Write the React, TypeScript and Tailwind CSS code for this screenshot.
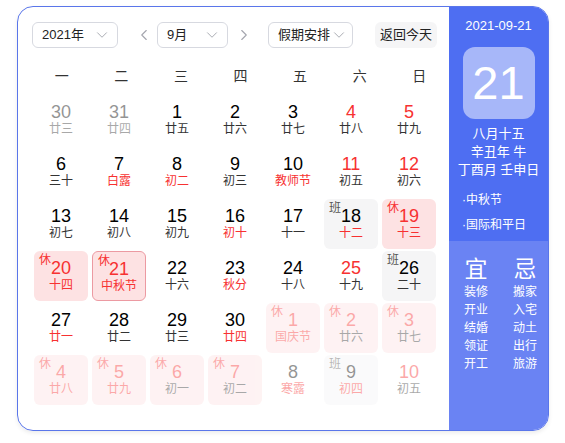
import { ChevronDown, ChevronLeft, ChevronRight } from 'lucide-react'

type Cell = {
  d: number
  l: string
  red?: boolean
  lred?: boolean
  tag?: '休' | '班'
  faded?: boolean
  selected?: boolean
}

const weeks: Cell[][] = [
  [
    { d: 30, l: '廿三', faded: true },
    { d: 31, l: '廿四', faded: true },
    { d: 1, l: '廿五' },
    { d: 2, l: '廿六' },
    { d: 3, l: '廿七' },
    { d: 4, l: '廿八', red: true },
    { d: 5, l: '廿九', red: true },
  ],
  [
    { d: 6, l: '三十' },
    { d: 7, l: '白露', lred: true },
    { d: 8, l: '初二', lred: true },
    { d: 9, l: '初三' },
    { d: 10, l: '教师节', lred: true },
    { d: 11, l: '初五', red: true },
    { d: 12, l: '初六', red: true },
  ],
  [
    { d: 13, l: '初七' },
    { d: 14, l: '初八' },
    { d: 15, l: '初九' },
    { d: 16, l: '初十', lred: true },
    { d: 17, l: '十一' },
    { d: 18, l: '十二', lred: true, tag: '班' },
    { d: 19, l: '十三', red: true, lred: true, tag: '休' },
  ],
  [
    { d: 20, l: '十四', red: true, lred: true, tag: '休' },
    { d: 21, l: '中秋节', red: true, lred: true, tag: '休', selected: true },
    { d: 22, l: '十六' },
    { d: 23, l: '秋分', lred: true },
    { d: 24, l: '十八' },
    { d: 25, l: '十九', red: true },
    { d: 26, l: '二十', tag: '班' },
  ],
  [
    { d: 27, l: '廿一', lred: true },
    { d: 28, l: '廿二' },
    { d: 29, l: '廿三' },
    { d: 30, l: '廿四', lred: true },
    { d: 1, l: '国庆节', red: true, lred: true, tag: '休', faded: true },
    { d: 2, l: '廿六', red: true, tag: '休', faded: true },
    { d: 3, l: '廿七', red: true, tag: '休', faded: true },
  ],
  [
    { d: 4, l: '廿八', red: true, lred: true, tag: '休', faded: true },
    { d: 5, l: '廿九', red: true, lred: true, tag: '休', faded: true },
    { d: 6, l: '初一', red: true, tag: '休', faded: true },
    { d: 7, l: '初二', red: true, tag: '休', faded: true },
    { d: 8, l: '寒露', lred: true, faded: true },
    { d: 9, l: '初四', lred: true, tag: '班', faded: true },
    { d: 10, l: '初五', red: true, faded: true },
  ],
]

const yi = ['装修', '开业', '结婚', '领证', '开工']
const ji = ['搬家', '入宅', '动土', '出行', '旅游']

function Select({ label, width }: { label: string; width: string }) {
  return (
    <div
      className={`${width} h-[26px] flex items-center justify-between pl-[9px] pr-[6px] rounded-[6px] border border-[#d7d9e0] text-[13px] text-[#222] whitespace-nowrap`}
    >
      <span>{label}</span>
      <ChevronDown className="w-[18px] h-[18px] shrink-0 text-[#a4a6ae]" strokeWidth={1.25} />
    </div>
  )
}

function DayCell({ c }: { c: Cell }) {
  const bg =
    c.tag === '休' ? 'bg-[#fde2e3]' : c.tag === '班' ? 'bg-[#f5f5f6]' : ''
  return (
    <div
      className={`relative h-[50px] rounded-[6px] flex flex-col items-center pt-[7px] ${bg} ${
        c.selected ? 'border border-[#ec9aa2] pt-[6px]' : ''
      } ${c.faded ? 'opacity-[0.42]' : ''}`}
    >
      {c.tag && (
        <span
          className={`absolute left-[5px] top-[2px] text-[12px] leading-[14px] ${
            c.tag === '休' ? 'text-[#f73131]' : 'text-[#555]'
          } ${c.selected ? 'left-[4px] top-[1px]' : ''}`}
        >
          {c.tag}
        </span>
      )}
      <span
        className={`text-[18px] leading-[20px] font-['Liberation_Sans',Arial,sans-serif] ${
          c.red ? 'text-[#f73131]' : 'text-[#000]'
        }`}
      >
        {c.d}
      </span>
      <span
        className={`text-[12px] leading-[14px] ${c.lred ? 'text-[#f73131]' : 'text-[#333]'}`}
      >
        {c.l}
      </span>
    </div>
  )
}

export default function App() {
  return (
    <div className="w-[565px] h-[443px] bg-white font-['Liberation_Sans','Noto_Sans_CJK_SC',sans-serif]">
      <div className="ml-[17px] mt-[6px] w-[532px] h-[425px] flex rounded-[16px] border border-[#5a76ea] overflow-hidden shadow-[0_2px_4px_rgba(0,0,0,0.08)]">
        <div className="flex-1 pl-[14px] pt-[15px]">
          <div className="flex items-center h-[26px]">
            <Select label="2021年" width="w-[86px]" />
            <ChevronLeft className="ml-[17px] w-[18px] h-[18px] text-[#a4a6ae]" strokeWidth={1.5} />
            <div className="ml-[4px]">
              <Select label="9月" width="w-[71px]" />
            </div>
            <ChevronRight className="ml-[7px] w-[18px] h-[18px] text-[#a4a6ae]" strokeWidth={1.5} />
            <div className="ml-[15px]">
              <Select label="假期安排" width="w-[85px]" />
            </div>
            <div className="ml-[22px] h-[26px] px-[5px] rounded-[6px] bg-[#f5f5f6] flex items-center text-[13px] text-[#222] whitespace-nowrap">
              返回今天
            </div>
          </div>
          <div className="px-[2px]">
            <div className="grid grid-cols-7 gap-x-[4px] h-[36px] mt-[10px] items-center text-[14px] text-[#333]">
              {['一', '二', '三', '四', '五', '六', '日'].map((w) => (
                <div key={w} className="text-center">
                  {w}
                </div>
              ))}
            </div>
            <div className="grid grid-cols-7 gap-x-[4px] gap-y-[2px] mt-[1px] w-[402px]">
              {weeks.flat().map((c, i) => (
                <DayCell key={i} c={c} />
              ))}
            </div>
          </div>
        </div>
        <div className="w-[99px] flex flex-col text-white">
          <div className="h-[234px] bg-[#4e6ef2] flex flex-col items-center pt-[11px]">
            <div className="text-[13px] leading-[16px]">2021-09-21</div>
            <div className="mt-[13px] w-[72px] h-[72px] rounded-[12px] bg-white/50 flex items-center justify-center text-[47px] font-['Liberation_Sans',Arial,sans-serif]">
              21
            </div>
            <div className="mt-[6px] text-[13px] leading-[18px] text-center">
              <div>八月十五</div>
              <div>辛丑年 牛</div>
              <div>丁酉月 壬申日</div>
            </div>
            <div className="self-start pl-[13px] mt-[9px] text-[12px] leading-[25px]">
              <div>·中秋节</div>
              <div>·国际和平日</div>
            </div>
          </div>
          <div className="flex-1 bg-[#6a83f3] flex justify-center gap-[25px] pt-[14px] pl-[4px]">
            {[
              ['宜', yi],
              ['忌', ji],
            ].map(([h, items]) => (
              <div key={h as string} className="flex flex-col items-center">
                <div className="text-[23px] leading-[28px]">{h as string}</div>
                {(items as string[]).map((t) => (
                  <div key={t} className="text-[12px] leading-[18px]">
                    {t}
                  </div>
                ))}
              </div>
            ))}
          </div>
        </div>
      </div>
    </div>
  )
}
